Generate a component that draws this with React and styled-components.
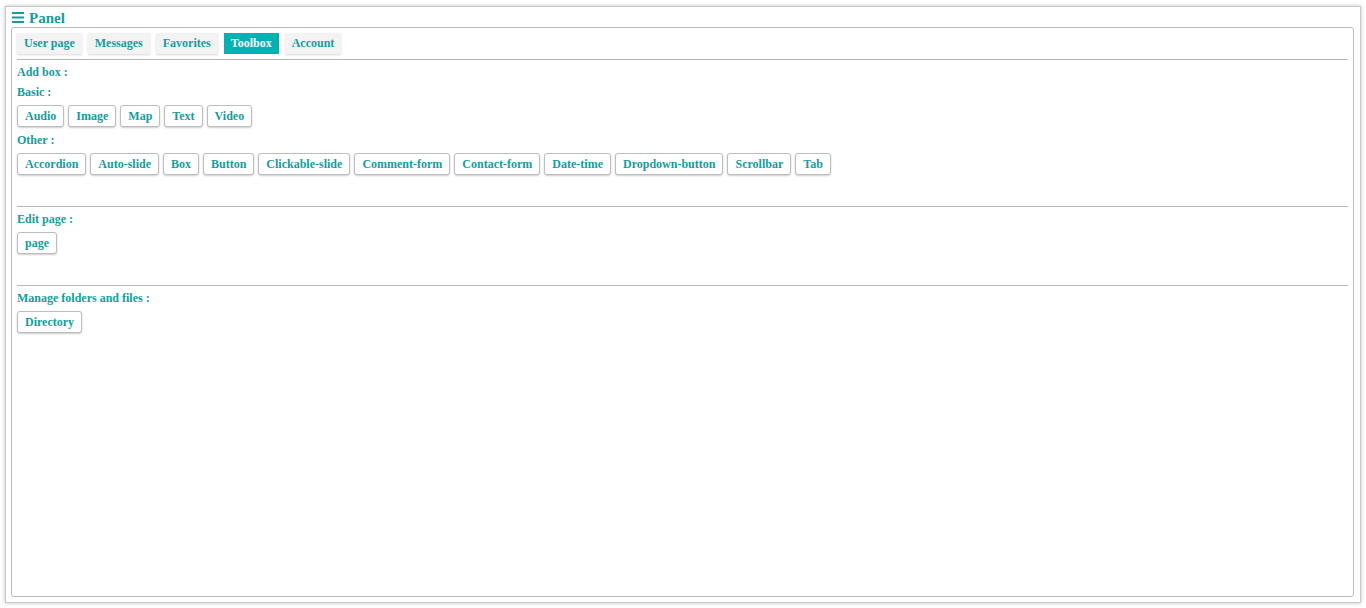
import React from "react";
import styled, { createGlobalStyle } from "styled-components";

const GlobalStyle = createGlobalStyle`
  html, body {
    margin: 0;
    padding: 0;
    background: #ffffff;
  }
  body {
    font-family: "Liberation Serif", "Times New Roman", serif;
  }
`;

const tabs = ["User page", "Messages", "Favorites", "Toolbox", "Account"];
const basic = ["Audio", "Image", "Map", "Text", "Video"];
const other = [
  "Accordion",
  "Auto-slide",
  "Box",
  "Button",
  "Clickable-slide",
  "Comment-form",
  "Contact-form",
  "Date-time",
  "Dropdown-button",
  "Scrollbar",
  "Tab",
];

const MenuIcon = () => (
  <svg width="12" height="12" viewBox="0 0 12 12">
    <rect x="0" y="1" width="12" height="2" fill="#139e9e" />
    <rect x="0" y="5.5" width="12" height="2" fill="#139e9e" />
    <rect x="0" y="10" width="12" height="2" fill="#139e9e" />
  </svg>
);

const App = () => {
  return (
    <>
      <GlobalStyle />
      <Page>
        <Panel>
          <Title>
            <MenuIcon />
            <span>Panel</span>
          </Title>
          <Inner>
            <TabBar>
              {tabs.map((t) => (
                <Tab key={t} $active={t === "Toolbox"}>
                  {t}
                </Tab>
              ))}
            </TabBar>
            <Rule />
            <Section>
              <Label>Add box :</Label>
              <Label>Basic :</Label>
              <Row>
                {basic.map((b) => (
                  <Button key={b}>{b}</Button>
                ))}
              </Row>
              <Label>Other :</Label>
              <Row>
                {other.map((b) => (
                  <Button key={b}>{b}</Button>
                ))}
              </Row>
            </Section>
            <Rule />
            <Section>
              <Label>Edit page :</Label>
              <Row>
                <Button>page</Button>
              </Row>
            </Section>
            <Rule />
            <Section $last>
              <Label>Manage folders and files :</Label>
              <Row>
                <Button>Directory</Button>
              </Row>
            </Section>
          </Inner>
        </Panel>
      </Page>
    </>
  );
};

export default App;

const Page = styled.div`
  height: 608px;
  padding: 6px 5px 5px 5px;
  box-sizing: border-box;
  display: flex;
`;

const Panel = styled.div`
  flex: 1;
  display: flex;
  flex-direction: column;
  border: 1px solid #c8c8c8;
  box-shadow: 0 0 4px rgba(0, 0, 0, 0.25);
  background: #fff;
  padding: 0 6px 5px 5px;
`;

const Title = styled.div`
  height: 20px;
  display: flex;
  align-items: center;
  gap: 5px;
  padding-left: 1px;
  color: #139e9e;
  font-weight: bold;
  font-size: 15px;

  span {
    line-height: 20px;
    padding-top: 2px;
  }
`;

const Inner = styled.div`
  flex: 1;
  border: 1px solid #bbbbbb;
  border-radius: 3px;
  padding: 0 5px;
`;

const TabBar = styled.div`
  display: flex;
  gap: 6px;
  padding-top: 5px;
  padding-bottom: 5px;
`;

const Tab = styled.div`
  height: 21px;
  line-height: 21px;
  padding: 0 7px;
  font-size: 12px;
  font-weight: bold;
  color: ${(p) => (p.$active ? "#ffffff" : "#139e9e")};
  background: ${(p) => (p.$active ? "#00b2b2" : "#f3f3f3")};
  box-shadow: ${(p) => (p.$active ? "none" : "0 1px 2px rgba(0, 0, 0, 0.15)")};
`;

const Rule = styled.div`
  height: 1px;
  background: #b8b8b8;
`;

const Section = styled.div`
  padding-bottom: ${(p) => (p.$last ? "0" : "30px")};
`;

const Label = styled.div`
  margin-top: 5px;
  line-height: 15px;
  font-size: 12px;
  font-weight: bold;
  color: #139e9e;
`;

const Row = styled.div`
  display: flex;
  flex-wrap: wrap;
  gap: 4px;
  margin-top: 5px;
  padding-bottom: 1px;
`;

const Button = styled.div`
  height: 20px;
  line-height: 20px;
  padding: 0 7px;
  border: 1px solid #bdbdbd;
  border-radius: 3px;
  background: #fff;
  box-shadow: 0 1px 2px rgba(0, 0, 0, 0.2);
  font-size: 12px;
  font-weight: bold;
  color: #139e9e;
  cursor: pointer;
`;
